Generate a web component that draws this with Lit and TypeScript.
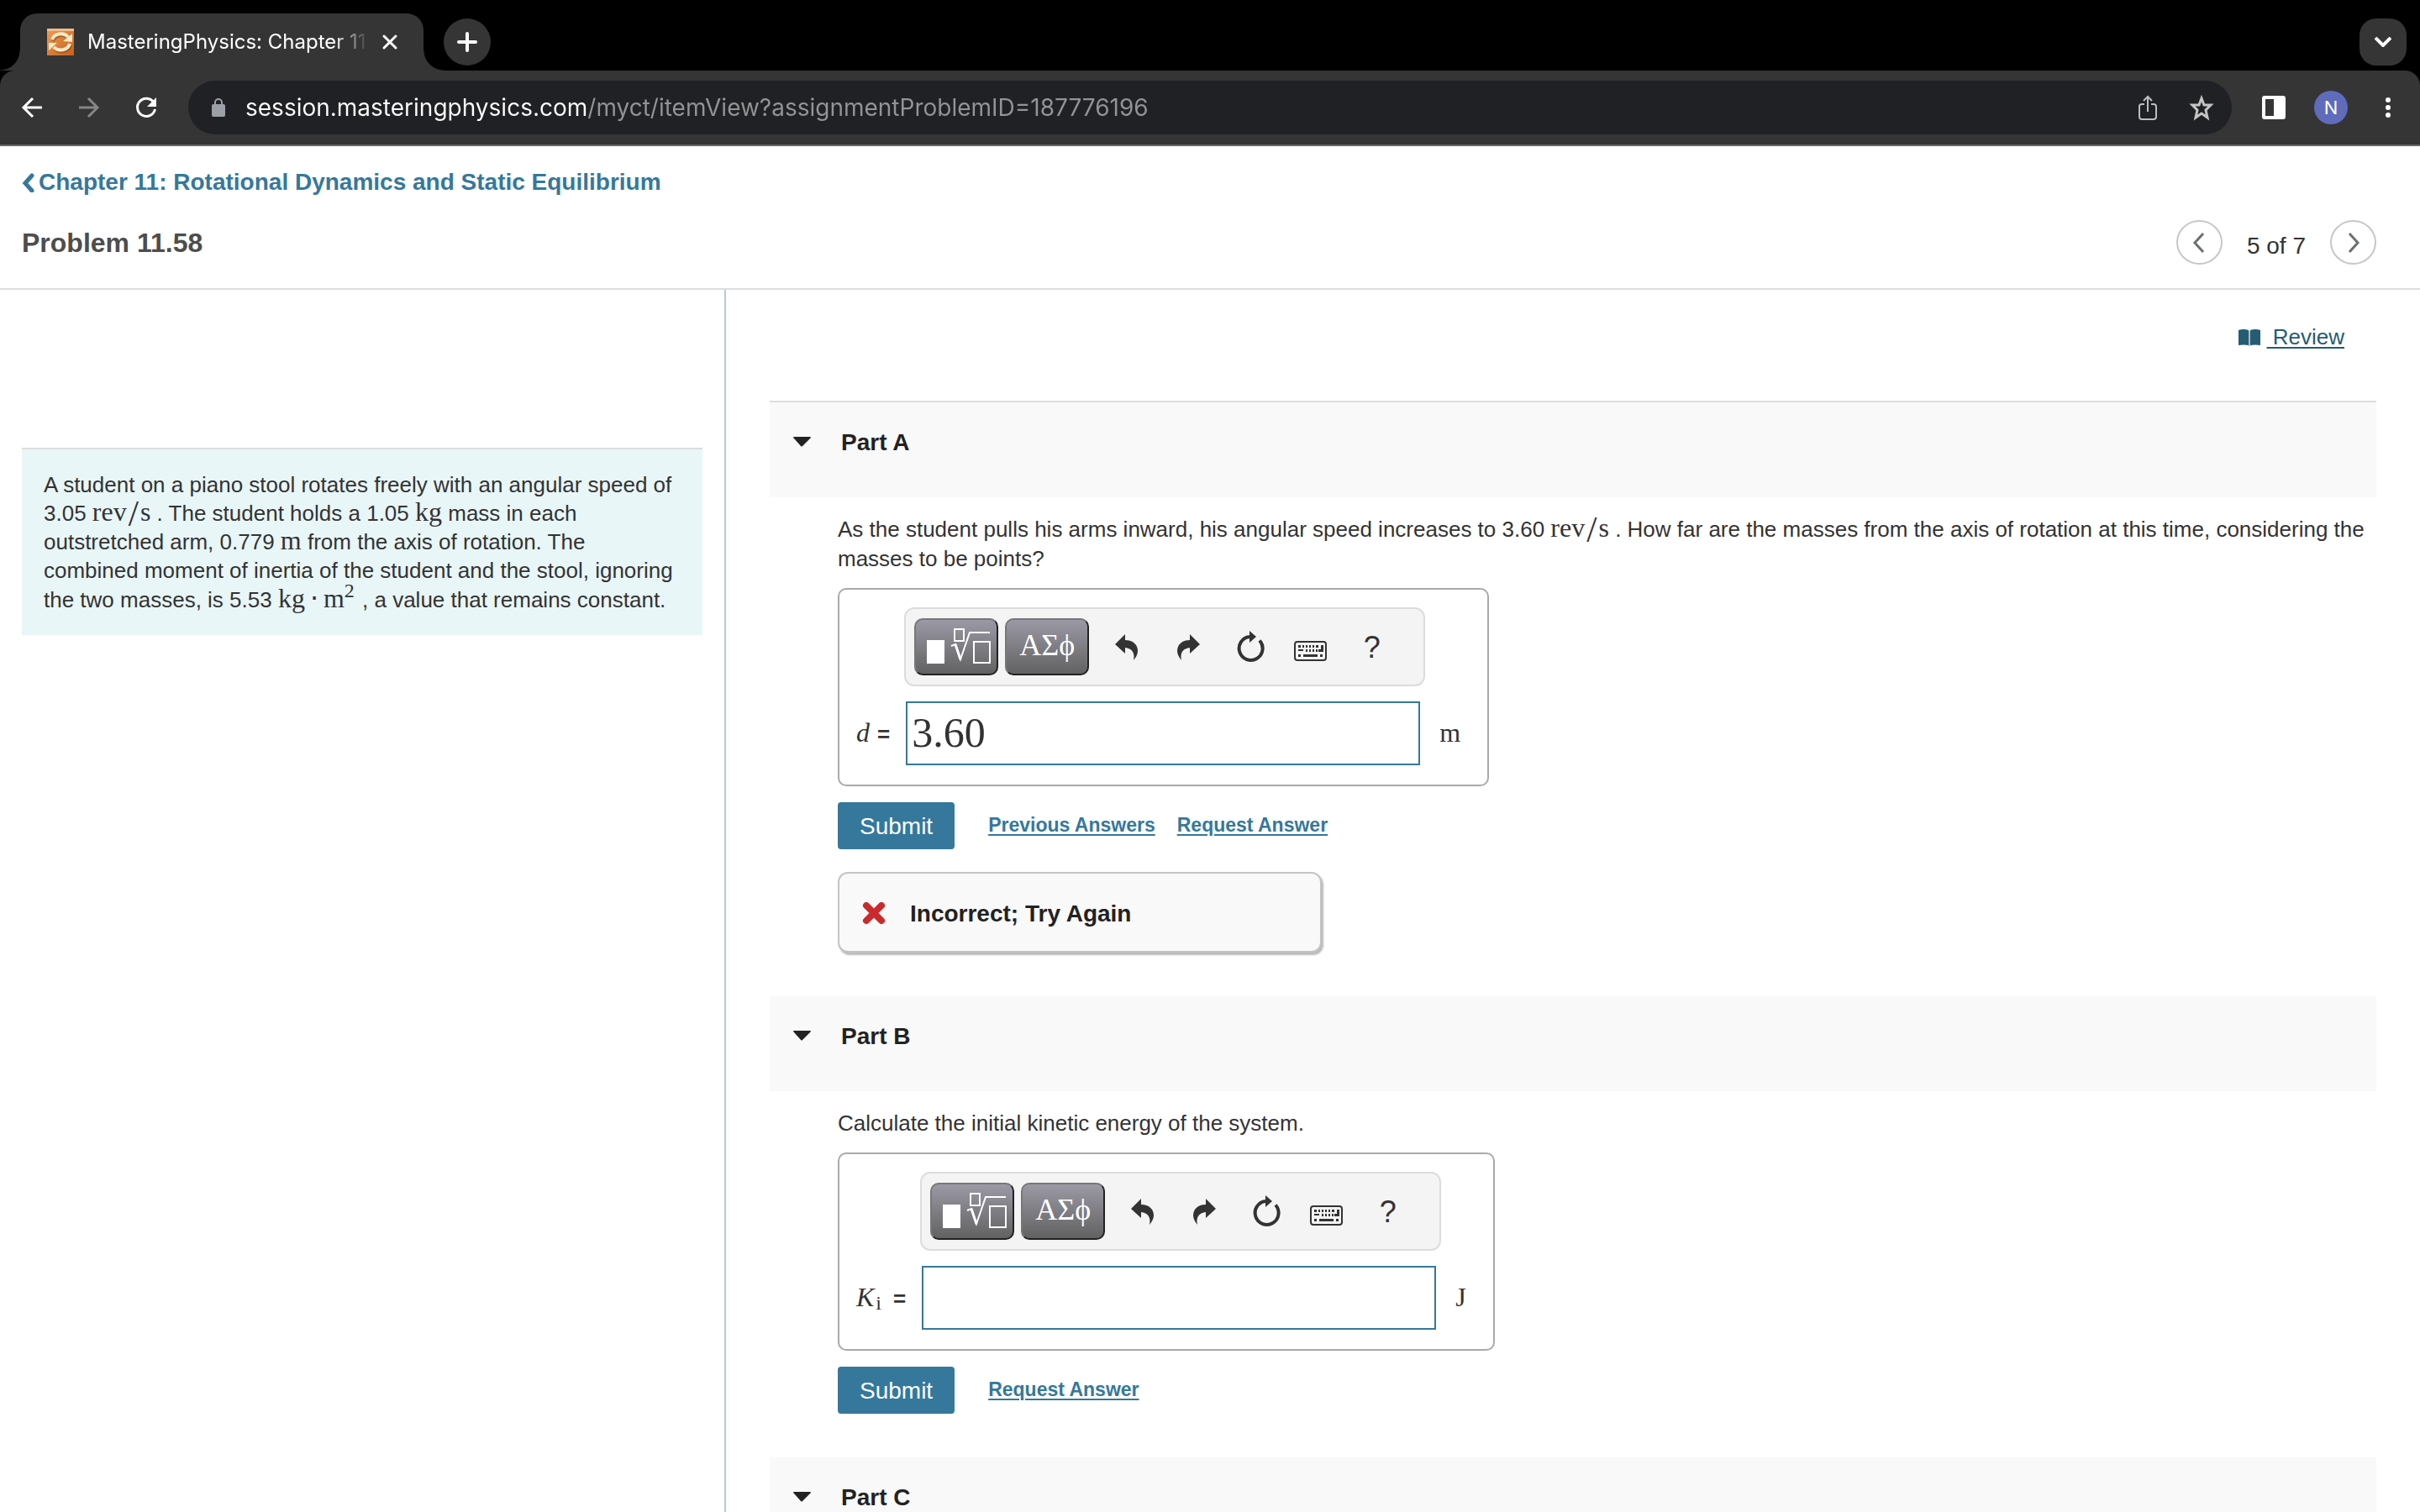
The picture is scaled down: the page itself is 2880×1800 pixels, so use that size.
import { LitElement, html, css, svg, nothing } from "lit";
import type { TemplateResult } from "lit";
import { customElement, property, state } from "lit/decorators.js";

const base = css`
  *,
  *::before,
  *::after {
    box-sizing: border-box;
  }
  button {
    font: inherit;
    color: inherit;
    background: none;
    border: 0;
    padding: 0;
    margin: 0;
    cursor: pointer;
  }
  svg {
    display: block;
    flex: none;
  }
  h1,
  h2,
  p {
    margin: 0;
    font-weight: inherit;
    font-size: inherit;
  }
`;

const mathStyles = css`
  .math {
    font-family: "Liberation Serif", serif;
    font-size: 32px;
    line-height: 30px;
    white-space: nowrap;
  }
  .slash {
    font-size: 44px;
    line-height: 20px;
    padding: 0 2px;
    vertical-align: -6px;
  }
  .dot {
    padding: 0 6px;
  }
  .math sup,
  .math sub {
    font-size: 24px;
    line-height: 14px;
  }
  .math sup {
    padding-right: 2px;
  }
`;

const unitRevPerSecond = html`<span class="math">rev<span class="slash">/</span>s</span>`;

@customElement("browser-frame")
export class BrowserFrame extends LitElement {
  @property() pageTitle = "";
  @property() url = "";

  static styles = [
    base,
    css`
      :host {
        display: block;
        background: #000;
        color: #fff;
        font-family: Inter, "Liberation Sans", sans-serif;
      }
      .strip {
        display: flex;
        align-items: flex-end;
        height: 84px;
        padding: 0 16px 0 24px;
      }
      .tab {
        position: relative;
        display: flex;
        align-items: center;
        width: 480px;
        height: 68px;
        padding: 0 29px 0 32px;
        border-radius: 20px 20px 0 0;
        background: #353535;
      }
      .tab::before,
      .tab::after {
        content: "";
        position: absolute;
        bottom: 0;
        width: 24px;
        height: 24px;
      }
      .tab::before {
        right: 100%;
        background: radial-gradient(circle at 0 0, transparent 23px, #353535 24px);
      }
      .tab::after {
        left: 100%;
        background: radial-gradient(circle at 100% 0, transparent 23px, #353535 24px);
      }
      .tab-title {
        flex: 1;
        overflow: hidden;
        white-space: nowrap;
        margin: 0 10px 0 16px;
        font-size: 24px;
        line-height: 32px;
        -webkit-mask-image: linear-gradient(to left, transparent 4px, #000 46px);
        mask-image: linear-gradient(to left, transparent 4px, #000 46px);
      }
      .round {
        display: grid;
        place-items: center;
        width: 56px;
        height: 56px;
        margin: 0 24px 6px;
        border-radius: 28px;
        background: #353535;
      }
      .search {
        margin: 0 0 6px auto;
        border-radius: 20px;
      }
      .bar {
        display: flex;
        align-items: center;
        height: 90px;
        padding: 0 22px 0 20px;
        border-radius: 18px 18px 0 0;
        border-bottom: 2px solid #656565;
        background: #353535;
      }
      .nav {
        display: flex;
        gap: 32px;
        margin-right: 32px;
      }
      .address {
        flex: 1;
        display: flex;
        align-items: center;
        gap: 24px;
        height: 64px;
        padding: 0 20px 0 28px;
        border-radius: 32px;
        background: #202124;
      }
      .url {
        flex: 1;
        min-width: 0;
        height: 40px;
        border: 0;
        outline: 0;
        padding: 0;
        font: 28px/40px Inter, "Liberation Sans", sans-serif;
        color: transparent;
        background: linear-gradient(to right, #fff 408px, #939496 408px);
        -webkit-background-clip: text;
        background-clip: text;
      }
      .page-actions {
        display: flex;
        gap: 32px;
      }
      .tools {
        display: flex;
        align-items: center;
        gap: 32px;
        margin-left: 34px;
      }
      .avatar {
        width: 40px;
        height: 40px;
        border-radius: 20px;
        background: #5f6bbb;
        font-size: 22px;
        line-height: 40px;
        text-align: center;
      }
    `,
  ];

  render() {
    return html`
      <div class="strip">
        <div class="tab">
          <svg width="32" height="32" viewBox="0 0 32 32">
            <defs>
              <linearGradient id="g" x1="0" y1="0" x2="1" y2="1">
                <stop offset="0" stop-color="#ee9c55" />
                <stop offset="1" stop-color="#c5611d" />
              </linearGradient>
            </defs>
            <rect width="32" height="32" fill="url(#g)" />
            <rect width="32" height="3" fill="#f2bb8c" />
            <g fill="none" stroke="#8c4a14" stroke-width="4" opacity=".6" transform="translate(1 2)">
              <path d="M6 13a11 10 0 0 1 19-3M27 18a11 10 0 0 1-19 4" />
            </g>
            <g fill="none" stroke="#f8eac8" stroke-width="4">
              <path d="M6 13a11 10 0 0 1 19-3M27 18a11 10 0 0 1-19 4" />
            </g>
            <path fill="#f8eac8" d="M30 6v10l-11-1zM2 26v-9l10 0z" />
          </svg>
          <span class="tab-title">${this.pageTitle}</span>
          <button aria-label="Close tab">
            <svg width="22" height="22" viewBox="0 0 22 22" fill="none" stroke="#fff" stroke-width="3" stroke-linecap="round">
              <path d="M4 4l14 14M18 4L4 18" />
            </svg>
          </button>
        </div>
        <button class="round" aria-label="New tab">
          <svg width="24" height="24" viewBox="0 0 24 24" stroke="#fff" stroke-width="4" stroke-linecap="round">
            <path d="M12 2v20M2 12h20" />
          </svg>
        </button>
        <button class="round search" aria-label="Search tabs">
          <svg width="20" height="12" viewBox="0 0 20 12" fill="none" stroke="#fff" stroke-width="4">
            <path d="M1 1l9 9 9-9" />
          </svg>
        </button>
      </div>
      <div class="bar">
        <div class="nav">
          <button aria-label="Back">
            <svg width="36" height="36" viewBox="0 0 36 36" fill="none" stroke="#fff" stroke-width="3">
              <path d="M30 18H8M19 7L8 18l11 11" />
            </svg>
          </button>
          <button aria-label="Forward">
            <svg width="36" height="36" viewBox="0 0 36 36" fill="none" stroke="#868686" stroke-width="3">
              <path d="M6 18h22M17 7l11 11-11 11" />
            </svg>
          </button>
          <button aria-label="Reload">
            <svg width="36" height="36" viewBox="0 0 36 36" fill="none" stroke="#fff" stroke-width="3">
              <path d="M27 12a10.600 10.600 0 1 0 1.500 8" />
              <path d="M30 6v11H19z" fill="#fff" stroke="none" />
            </svg>
          </button>
        </div>
        <div class="address">
          <svg width="16" height="22" viewBox="0 0 16 22">
            <rect y="7" width="16" height="15" rx="2" fill="#9aa0a6" />
            <path d="M4 8V5a4 4 0 0 1 8 0v3" fill="none" stroke="#9aa0a6" stroke-width="2" />
          </svg>
          <input class="url" aria-label="Address" spellcheck="false" .value=${this.url} />
          <div class="page-actions">
            <button aria-label="Share">
              <svg width="32" height="32" viewBox="0 0 32 32" fill="none" stroke="#bdbdbd" stroke-width="2">
                <path d="M12 12H9a3 3 0 0 0-3 3v12a3 3 0 0 0 3 3h14a3 3 0 0 0 3-3V15a3 3 0 0 0-3-3h-3M16 21V3M11 8l5-5 5 5" />
              </svg>
            </button>
            <button aria-label="Bookmark">
              <svg width="32" height="32" viewBox="0 0 32 32" fill="none" stroke="#c4c4c4" stroke-width="3">
                <path d="M16 5l3 8h8l-6 6 2 9-7-5-7 5 2-9-6-6h8z" />
              </svg>
            </button>
          </div>
        </div>
        <div class="tools">
          <button aria-label="Side panel">
            <svg width="32" height="28" viewBox="0 0 32 28">
              <path fill="#fff" fill-rule="evenodd" d="M5 0h22a3 3 0 0 1 3 3v22a3 3 0 0 1-3 3H5a3 3 0 0 1-3-3V3a3 3 0 0 1 3-3zm1 4v20h10V4z" />
            </svg>
          </button>
          <button class="avatar" aria-label="Profile">N</button>
          <button aria-label="Menu">
            <svg width="32" height="28" viewBox="0 0 32 28" fill="#fff">
              <circle cx="16" cy="5" r="3" />
              <circle cx="16" cy="14" r="3" />
              <circle cx="16" cy="23" r="3" />
            </svg>
          </button>
        </div>
      </div>
    `;
  }
}

interface Tool {
  name: string;
  art: TemplateResult;
}

const arrow = "M6 17L18 5v7C28 12 33 18 33 25c0 4-2 7-5 11C30 27 26 22 18 21v7Z";

const keys = [14, 18, 22, 26];

const tools: Tool[] = [
  { name: "Undo", art: svg`<path d=${arrow} />` },
  { name: "Redo", art: svg`<path d=${arrow} transform="matrix(-1 0 0 1 40 0)" />` },
  {
    name: "Reset",
    art: svg`
      <path d="M32 12.500A14 14 0 1 1 20 8" fill="none" stroke="#333" stroke-width="4" />
      <path d="M20 1l8 7-8 7z" />`,
  },
  {
    name: "Keyboard shortcuts",
    art: svg`
      <rect x="1" y="14" width="37" height="22" rx="3" fill="none" stroke="#333" stroke-width="2" />
      <path d="M5 18h3v3H5zM5 23h6v2H5zM5 29h3v3H5zM11 29h17v3H11zM31 29h3v3h-3zM32 18h3v8h-6v-3h3z" />
      ${keys.map((x) => svg`<rect x=${x - 4} y="18" width="2" height="3" /><rect x=${x} y="23" width="2" height="3" />`)}
      <path d="M26 18h3v3h-3z" />`,
  },
];

@customElement("answer-field")
export class AnswerField extends LitElement {
  @property({ attribute: false }) symbol: unknown = nothing;
  @property() unit = "";
  @property() value = "";

  static styles = [
    base,
    mathStyles,
    css`
      :host {
        display: inline-grid;
        grid-template-columns: auto auto auto;
        column-gap: 17px;
        row-gap: 18px;
        align-items: center;
        padding: 21px 32px 23px 20px;
        border: 2px solid #a9a9a9;
        border-radius: 10px;
        box-sizing: border-box;
        vertical-align: top;
      }
      .toolbar {
        grid-column: 2;
        display: flex;
        gap: 8px;
        width: 620px;
        padding: 11px 10px;
        border: 2px solid #dcdcdc;
        border-radius: 12px;
        background: #f4f4f4;
      }
      .palette {
        display: grid;
        place-items: center;
        width: 100px;
        height: 68px;
        border: 2px solid;
        border-color: #777 #222 #222 #777;
        border-radius: 10px;
        background: linear-gradient(#9b99a5, #626262);
        color: #fff;
        font: 36px/40px "Liberation Serif", "DejaVu Serif", serif;
      }
      .letters {
        padding-bottom: 4px;
      }
      .tools {
        display: flex;
      }
      .tool {
        display: grid;
        place-items: center;
        width: 73px;
        height: 68px;
        font-size: 36px;
        color: #333;
      }
      .symbol {
        grid-column: 1;
        display: flex;
        align-items: baseline;
        gap: 9px;
        line-height: 32px;
      }
      .equals {
        font-weight: bold;
      }
      .symbol sub {
        padding: 0 5px 0 2px;
        vertical-align: -4px;
      }
      .entry {
        padding-left: 2px;
      }
      .input {
        display: block;
        width: 612px;
        height: 76px;
        padding: 0 5px 2px;
        border: 2px solid #35789b;
        border-radius: 0;
        outline: 0;
        background: #fff;
        color: #333;
        font: 50px/68px "Liberation Serif", serif;
      }
      .unit {
        padding-bottom: 2px;
      }
    `,
  ];

  render() {
    return html`
      <div class="toolbar" role="toolbar" aria-label="Equation tools">
        <button class="palette" aria-label="Templates">
          <svg width="96" height="64" viewBox="2 2 96 64" fill="none" stroke="#fff" stroke-width="2">
            <rect x="15" y="26" width="21" height="28" fill="#fff" stroke="none" />
            <rect x="48" y="13" width="11" height="14" />
            <path d="M44 33l5-2 6 18L66 17h24" />
            <path d="M49 31l6 18" stroke-width="3" />
            <rect x="71" y="28" width="19" height="25" />
          </svg>
        </button>
        <button class="palette letters" aria-label="Greek symbols">ΑΣϕ</button>
        <div class="tools">
          ${tools.map(
            (t) => html`<button class="tool" aria-label=${t.name}>
              <svg width="40" height="40" viewBox="0 0 40 40" fill="#333">${t.art}</svg>
            </button>`,
          )}
          <button class="tool" aria-label="Help">?</button>
        </div>
      </div>
      <label class="symbol" for="answer"><span class="math">${this.symbol}</span><span class="equals">=</span></label>
      <div class="entry"><input id="answer" class="input" autocomplete="off" .value=${this.value} /></div>
      <span class="math unit">${this.unit}</span>
    `;
  }
}

@customElement("problem-part")
export class ProblemPart extends LitElement {
  @property() heading = "";
  @state() private open = true;

  static styles = [
    base,
    css`
      :host {
        display: block;
      }
      .head {
        display: flex;
        align-items: center;
        gap: 35px;
        width: 100%;
        padding: 31px 28px 48px;
        background: #f9f9f9;
        color: #222;
        font-size: 28px;
        font-weight: bold;
        line-height: 34px;
        text-align: left;
      }
      .body {
        padding: 21px 0 52px 81px;
      }
    `,
  ];

  render() {
    return html`
      <h2>
        <button class="head" aria-expanded=${this.open} @click=${() => (this.open = !this.open)}>
          <svg width="22" height="22" viewBox="0 0 22 22" fill="#222">
            <path d="M1 4h19q2 0 0 2L11 15q-1 1-2 0L1 6q-2-2 0-2z" />
          </svg>
          ${this.heading}
        </button>
      </h2>
      ${this.open ? html`<div class="body"><slot></slot></div>` : nothing}
    `;
  }
}

@customElement("app-root")
export class AppRoot extends LitElement {
  static styles = [
    base,
    mathStyles,
    css`
      :host {
        display: flex;
        flex-direction: column;
        height: 100vh;
        overflow: hidden;
        background: #fff;
        color: #333;
        font-family: "Liberation Sans", Arial, sans-serif;
        font-size: 26px;
        line-height: 35px;
      }
      .header {
        display: flex;
        flex-direction: column;
        gap: 28px;
        padding: 26px 52px 28px 26px;
        border-bottom: 2px solid #ddd;
      }
      .back {
        display: flex;
        align-items: center;
        align-self: flex-start;
        gap: 2px;
        color: #35789b;
        font-size: 28px;
        font-weight: bold;
        line-height: 34px;
        text-decoration: none;
      }
      .row {
        display: flex;
        align-items: center;
        justify-content: space-between;
      }
      .title {
        color: #4d4d4d;
        font-size: 32px;
        font-weight: bold;
        line-height: 40px;
      }
      .pager {
        display: flex;
        align-items: flex-end;
        gap: 29px;
        font-size: 28px;
        line-height: 44px;
      }
      .step {
        display: grid;
        place-items: center;
        width: 55px;
        height: 53px;
        border: 2px solid #c7c7c7;
        border-radius: 50%;
      }
      .main {
        flex: 1;
        display: grid;
        grid-template-columns: 30% 1fr;
        min-height: 0;
      }
      .side {
        padding: 188px 26px 0;
        border-right: 2px solid #b9c9dc;
      }
      .intro {
        padding: 25px 26px;
        border-top: 2px solid #ddd;
        background: #e8f6f7;
        line-height: 34px;
      }
      .work {
        padding: 39px 52px 0;
        overflow: hidden;
      }
      .review-row {
        display: flex;
        justify-content: flex-end;
        align-items: center;
        gap: 8px;
        padding: 0 38px 58px 0;
        border-bottom: 2px solid #ddd;
      }
      .review {
        color: #255c72;
        white-space: pre;
        text-decoration-thickness: 2px;
        text-underline-offset: 3px;
      }
      .question {
        margin-bottom: 17px;
      }
      .actions {
        display: flex;
        align-items: center;
        margin-top: 19px;
      }
      .submit {
        height: 56px;
        padding: 0 26px;
        margin-right: 40px;
        border-radius: 4px;
        background: #35789b;
        color: #fff;
        font-size: 28px;
      }
      .link {
        margin-right: 26px;
        padding-bottom: 2px;
        color: #35789b;
        font-size: 23px;
        font-weight: bold;
        text-decoration-thickness: 2px;
        text-underline-offset: 3px;
      }
      .feedback {
        display: flex;
        align-items: center;
        gap: 28px;
        width: 576px;
        height: 96px;
        margin-top: 27px;
        padding: 3px 28px 0 26px;
        border: 2px solid #c4c4c4;
        border-radius: 12px;
        background: #f9f9f9;
        box-shadow: 2px 3px 2px #bbb;
        color: #222;
        font-size: 28px;
        font-weight: bold;
      }
    `,
  ];

  render() {
    return html`
      <browser-frame
        pageTitle="MasteringPhysics: Chapter 11:"
        url="session.masteringphysics.com/myct/itemView?assignmentProblemID=187776196"
      ></browser-frame>
      <header class="header">
        <a class="back" href="#">
          <svg width="18" height="24" viewBox="0 0 18 24" fill="none" stroke="#35789b" stroke-width="5" stroke-linecap="round">
            <path d="M12 4L4 13l8 9" />
          </svg>
          Chapter 11: Rotational Dynamics and Static Equilibrium
        </a>
        <div class="row">
          <h1 class="title">Problem 11.58</h1>
          <div class="pager">
            <button class="step" aria-label="Previous item">
              <svg width="16" height="26" viewBox="0 0 16 26" fill="none" stroke="#6a7070" stroke-width="3">
                <path d="M13 2L3 13l10 11" />
              </svg>
            </button>
            <span>5 of 7</span>
            <button class="step" aria-label="Next item">
              <svg width="16" height="26" viewBox="0 0 16 26" fill="none" stroke="#6a7070" stroke-width="3">
                <path d="M3 2l10 11L3 24" />
              </svg>
            </button>
          </div>
        </div>
      </header>
      <main class="main">
        <aside class="side">
          <p class="intro">
            A student on a piano stool rotates freely with an angular speed of 3.05 ${unitRevPerSecond} . The student
            holds a 1.05 <span class="math">kg</span> mass in each outstretched arm, 0.779
            <span class="math">m</span> from the axis of rotation. The combined moment of inertia of the student and the
            stool, ignoring the two masses, is 5.53
            <span class="math">kg<span class="dot">⋅</span>m<sup>2</sup></span> , a value that remains constant.
          </p>
        </aside>
        <section class="work">
          <div class="review-row">
            <svg width="26" height="22" viewBox="0 0 26 22" fill="#255c72">
              <path d="M0 2q6-2 12 0v18q-6-1-12 0zM14 2q6-2 12 0v18q-6-1-12 0z" />
              <path d="M12 3h2v18h-2z" opacity=".4" />
            </svg>
            <a class="review" href="#"> Review</a>
          </div>
          <problem-part heading="Part A">
            <p class="question">
              As the student pulls his arms inward, his angular speed increases to 3.60 ${unitRevPerSecond} . How far
              are the masses from the axis of rotation at this time, considering the masses to be points?
            </p>
            <answer-field .symbol=${html`<i>d</i>`} unit="m" value="3.60"></answer-field>
            <div class="actions">
              <button class="submit">Submit</button>
              <a class="link" href="#">Previous Answers</a>
              <a class="link" href="#">Request Answer</a>
            </div>
            <div class="feedback" role="status">
              <svg width="30" height="28" viewBox="0 0 30 28" stroke="#cb2a2d" stroke-width="8" stroke-linecap="round">
                <path d="M6 4l18 18M24 4L6 22" />
              </svg>
              Incorrect; Try Again
            </div>
          </problem-part>
          <problem-part heading="Part B">
            <p class="question">Calculate the initial kinetic energy of the system.</p>
            <answer-field .symbol=${html`<i>K</i><sub>i</sub>`} unit="J"></answer-field>
            <div class="actions">
              <button class="submit">Submit</button>
              <a class="link" href="#">Request Answer</a>
            </div>
          </problem-part>
          <problem-part heading="Part C"></problem-part>
        </section>
      </main>
    `;
  }
}
